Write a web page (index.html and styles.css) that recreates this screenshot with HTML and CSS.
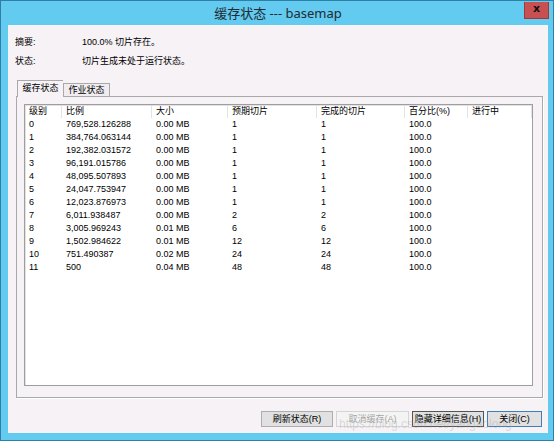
FILE: index.html
```html
<!DOCTYPE html>
<html lang="zh-CN">
<head>
    <meta charset="UTF-8">
    <title>缓存状态 --- basemap</title>
    <link rel="stylesheet" href="styles.css">
</head>
<body>
    <div class="window">
        <div class="titlebar">
            <div></div>
            <div class="title">缓存状态 --- basemap</div>
            <div class="close">x</div>
        </div>

        <div class="client">
            <div class="info-row">
                <span class="info-label">摘要:</span>
                <span>100.0% 切片存在。</span>
            </div>
            <div class="info-row">
                <span class="info-label">状态:</span>
                <span>切片生成未处于运行状态。</span>
            </div>

            <div class="tabs">
                <div class="tab tab-active">缓存状态</div>
                <div class="tab">作业状态</div>
            </div>

            <div class="tab-panel">
                <div class="list">
                    <div class="list-head">
                        <div>级别</div>
                        <div>比例</div>
                        <div>大小</div>
                        <div>预期切片</div>
                        <div>完成的切片</div>
                        <div>百分比(%)</div>
                        <div>进行中</div>
                    </div>
                    <div class="list-row"><div>0</div><div>769,528.126288</div><div>0.00 MB</div><div>1</div><div>1</div><div>100.0</div><div></div></div>
                    <div class="list-row"><div>1</div><div>384,764.063144</div><div>0.00 MB</div><div>1</div><div>1</div><div>100.0</div><div></div></div>
                    <div class="list-row"><div>2</div><div>192,382.031572</div><div>0.00 MB</div><div>1</div><div>1</div><div>100.0</div><div></div></div>
                    <div class="list-row"><div>3</div><div>96,191.015786</div><div>0.00 MB</div><div>1</div><div>1</div><div>100.0</div><div></div></div>
                    <div class="list-row"><div>4</div><div>48,095.507893</div><div>0.00 MB</div><div>1</div><div>1</div><div>100.0</div><div></div></div>
                    <div class="list-row"><div>5</div><div>24,047.753947</div><div>0.00 MB</div><div>1</div><div>1</div><div>100.0</div><div></div></div>
                    <div class="list-row"><div>6</div><div>12,023.876973</div><div>0.00 MB</div><div>1</div><div>1</div><div>100.0</div><div></div></div>
                    <div class="list-row"><div>7</div><div>6,011.938487</div><div>0.00 MB</div><div>2</div><div>2</div><div>100.0</div><div></div></div>
                    <div class="list-row"><div>8</div><div>3,005.969243</div><div>0.01 MB</div><div>6</div><div>6</div><div>100.0</div><div></div></div>
                    <div class="list-row"><div>9</div><div>1,502.984622</div><div>0.01 MB</div><div>12</div><div>12</div><div>100.0</div><div></div></div>
                    <div class="list-row"><div>10</div><div>751.490387</div><div>0.02 MB</div><div>24</div><div>24</div><div>100.0</div><div></div></div>
                    <div class="list-row"><div>11</div><div>500</div><div>0.04 MB</div><div>48</div><div>48</div><div>100.0</div><div></div></div>
                </div>
            </div>

            <div class="buttons">
                <div class="btn btn-refresh">刷新状态(R)</div>
                <div class="btn btn-disabled btn-cancel">取消缓存(A)</div>
                <div class="btn btn-focus btn-hide">隐藏详细信息(H)</div>
                <div class="btn btn-default btn-close">关闭(C)</div>
            </div>
        </div>

        <div class="watermark">https://blog.csdn.net/yangaolong</div>
    </div>
</body>
</html>
```

FILE: styles.css
```css
html, body {
    margin: 0;
    padding: 0;
    background: #ffffff;
}

* {
    box-sizing: border-box;
}

.window {
    position: relative;
    width: 554px;
    height: 441px;
    display: flex;
    flex-direction: column;
    background: #62cbef;
    border: 1px solid #2f7fa6;
    padding: 0 5px 7px 7px;
    font-family: "Liberation Sans", "Noto Sans CJK SC", sans-serif;
    font-size: 9px;
    color: #000;
}

/* 标题栏 */
.titlebar {
    height: 24px;
    display: grid;
    grid-template-columns: 1fr auto 1fr;
    align-items: start;
}

.title {
    font-family: "Noto Sans", "Noto Sans CJK SC", sans-serif;
    font-size: 13px;
    line-height: 24px;
    color: #1f2a33;
}

.close {
    justify-self: end;
    width: 25px;
    height: 17px;
    margin-top: 1px;
    margin-right: -1px;
    background: #c75050;
    border: 1px solid #9e3a3a;
    border-top: none;
    color: #111;
    font-family: "DejaVu Sans", sans-serif;
    font-weight: bold;
    font-size: 11px;
    line-height: 14px;
    text-align: center;
}

/* 客户区 */
.client {
    flex: 1;
    display: flex;
    flex-direction: column;
    background: #f6f2f6;
    padding: 7px 5px 0 7px;
}

.info-row {
    height: 19px;
    display: flex;
    align-items: center;
}

.info-label {
    width: 67px;
}

/* 选项卡 */
.tabs {
    display: flex;
    align-items: flex-end;
    height: 16px;
    margin-top: 10px;
    padding-left: 2px;
}

.tab {
    height: 13px;
    width: 47px;
    line-height: 12px;
    text-align: center;
    border: 1px solid #a9a9a9;
    border-bottom: none;
    background: #f0ecf0;
}

.tab-active {
    position: relative;
    z-index: 1;
    width: 46px;
    height: 17px;
    margin-bottom: -1px;
    line-height: 14px;
    background: #f6f2f6;
    border-right: none;
}

.tab-panel {
    height: 302px;
    margin-left: 1px;
    border: 1px solid #a9a9a9;
    box-shadow: 1px 1px 0 #ffffff;
    padding: 7px 9px 11px 7px;
}

/* 列表 */
.list {
    height: 100%;
    background: #ffffff;
    border: 1px solid #9e9e9e;
    box-shadow: inset 1px 1px 0 #e2e2e2;
}

.list-head,
.list-row {
    display: grid;
    grid-template-columns: 37px 90px 76px 89px 88px 63px 64px;
    height: 13px;
    line-height: 13px;
}

.list-head div {
    padding-left: 4px;
    border-right: 1px solid #e3e3e3;
    white-space: nowrap;
}

.list-row div {
    padding-left: 4px;
    white-space: nowrap;
}

.list-head + .list-row {
    margin-top: 0;
}

/* 按钮 */
.buttons {
    display: flex;
    justify-content: flex-end;
    gap: 3px;
    margin-top: 13px;
    margin-right: 1px;
}

.btn {
    height: 16px;
    line-height: 14px;
    text-align: center;
    background: #e1e1e1;
    border: 1px solid #adadad;
    white-space: nowrap;
}

.btn-refresh,
.btn-hide {
    width: 72px;
}

.btn-cancel {
    width: 73px;
}

.btn-close {
    width: 55px;
}

.btn-disabled {
    background: #f4f4f4;
    border-color: #d5d5d5;
    color: #a6a6a6;
}

.btn-focus {
    border-color: #555555;
}

.btn-default {
    border-color: #3d7fb8;
}

.watermark {
    position: absolute;
    left: 338px;
    top: 416px;
    font-family: "Liberation Sans", sans-serif;
    font-size: 12px;
    color: rgba(160, 160, 160, 0.35);
    pointer-events: none;
}
```
